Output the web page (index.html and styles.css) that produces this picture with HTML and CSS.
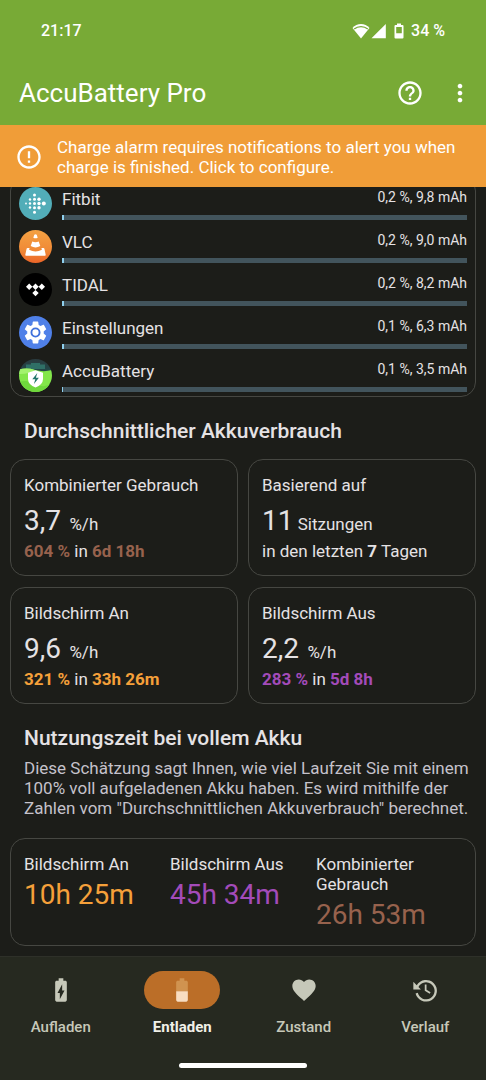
FILE: index.html
```html
<!DOCTYPE html>
<html lang="de">
<head>
<meta charset="utf-8">
<meta name="viewport" content="width=device-width, initial-scale=1">
<title>AccuBattery Pro</title>
<link rel="stylesheet" href="styles.css">
</head>
<body>
<header class="top">
  <div class="status">
    <span>21:17</span>
    <span class="status-icons">
      <svg class="wifi" viewBox="0 0 18 16"><path d="M9 15.500.5 5C2.700 2.400 5.800 1.100 9 1.100s6.300 1.300 8.500 3.900z" fill="#fff"/><path d="M2.200 6C6 2.800 12 2.800 15.800 6" fill="none" stroke="#78aa36" stroke-width="1.300"/></svg>
      <svg class="signal" viewBox="0 0 15 16"><path d="M.5 15.200H14.800V1z" fill="#fff"/></svg>
      <svg class="cell" viewBox="0 0 10 16"><path fill="#fff" fill-rule="evenodd" d="M3 .5h4V2h1.500Q9.500 2 9.500 3v11.500q0 1-1 1h-7q-1 0-1-1V3q0-1 1-1H3zM2.200 4v6.200h5.600V4z"/></svg>
      <span>34 %</span>
    </span>
  </div>
  <div class="appbar">
    <h1 class="title">AccuBattery Pro</h1>
    <button class="icon-btn" aria-label="Hilfe"><svg class="icon" viewBox="0 0 24 24"><path d="M11 18h2v-2h-2v2zm1-16C6.480 2 2 6.480 2 12s4.480 10 10 10 10-4.480 10-10S17.520 2 12 2zm0 18c-4.410 0-8-3.590-8-8s3.590-8 8-8 8 3.590 8 8-3.590 8-8 8zm0-14c-2.210 0-4 1.790-4 4h2c0-1.100.9-2 2-2s2 .9 2 2c0 2-3 1.750-3 5h2c0-2.250 3-2.500 3-5 0-2.210-1.790-4-4-4z"/></svg></button>
    <button class="icon-btn" aria-label="Menü"><svg class="icon" viewBox="0 0 24 24"><path d="M12 8c1.100 0 2-.9 2-2s-.9-2-2-2-2 .9-2 2 .9 2 2 2zm0 2c-1.100 0-2 .9-2 2s.9 2 2 2 2-.9 2-2-.9-2-2-2zm0 6c-1.100 0-2 .9-2 2s.9 2 2 2 2-.9 2-2-.9-2-2-2z"/></svg></button>
  </div>
</header>
<button class="banner">
  <svg class="icon" viewBox="0 0 24 24"><path d="M11 15h2v2h-2zm0-8h2v6h-2zm1-5C6.480 2 2 6.480 2 12s4.480 10 10 10 10-4.480 10-10S17.520 2 12 2zm0 18c-4.410 0-8-3.590-8-8s3.590-8 8-8 8 3.590 8 8-3.590 8-8 8z"/></svg>
  <span>Charge alarm requires notifications to alert you when charge is finished. Click to configure.</span>
</button>
<main class="content">
  <ul class="card apps">
    <li class="app">
      <svg class="app-icon" viewBox="0 0 33 33"><circle cx="16.500" cy="16.500" r="16.500" fill="#52adb8"/><g fill="#fff"><circle cx="7" cy="16.500" r=".9"/><circle cx="11" cy="12.500" r="1.200"/><circle cx="11" cy="16.500" r="1.200"/><circle cx="11" cy="20.500" r="1.200"/><circle cx="15.500" cy="8" r="1.500"/><circle cx="15.500" cy="12.300" r="1.500"/><circle cx="15.500" cy="16.500" r="1.500"/><circle cx="15.500" cy="20.800" r="1.500"/><circle cx="15.500" cy="25.200" r="1.500"/><circle cx="20" cy="12.300" r="1.700"/><circle cx="20" cy="16.500" r="1.700"/><circle cx="20" cy="20.800" r="1.700"/><circle cx="24.800" cy="16.500" r="2"/></g></svg>
      <div class="app-body"><span class="app-name">Fitbit</span><span class="app-use">0,2 %, 9,8 mAh</span><div class="bar"><div class="fill" style="width:0.6%"></div></div></div>
    </li>
    <li class="app">
      <svg class="app-icon" viewBox="0 0 33 33"><defs><linearGradient id="vlc" x2="0" y2="1"><stop stop-color="#f4a243"/><stop offset=".6" stop-color="#f08a36"/><stop offset="1" stop-color="#ec6528"/></linearGradient></defs><circle cx="16.500" cy="16.500" r="16.500" fill="url(#vlc)"/><g fill="#fff"><path d="M15.300 4.800q1.200-1 2.400 0l1 2.900q-2.200 1.200-4.400 0z"/><path d="M13.300 11.500q3.200 1.400 6.400 0l1.600 4.500q-4.800 2.800-9.600 0z"/><path d="M8.600 17.900h2l-.5 1.800q6.400 3.600 12.800 0l-.5-1.800h2q.8 0 1 .8l1.300 6q.2 1-.8 1H7.100q-1 0-.8-1l1.300-6q.2-.8 1-.8z"/></g></svg>
      <div class="app-body"><span class="app-name">VLC</span><span class="app-use">0,2 %, 9,0 mAh</span><div class="bar"><div class="fill" style="width:0.5%"></div></div></div>
    </li>
    <li class="app">
      <svg class="app-icon" viewBox="0 0 33 33"><circle cx="16.500" cy="16.500" r="16.500" fill="#000"/><path fill="#fff" d="M10.200 10.500l3.200 3.200-3.200 3.200L7 13.700zM16.500 10.500l3.200 3.200-3.200 3.200-3.200-3.200zM22.800 10.500l3.200 3.200-3.200 3.200-3.200-3.200zM16.500 16.900l3.200 3.200-3.200 3.200-3.200-3.200z"/></svg>
      <div class="app-body"><span class="app-name">TIDAL</span><span class="app-use">0,2 %, 8,2 mAh</span><div class="bar"><div class="fill" style="width:0.5%"></div></div></div>
    </li>
    <li class="app">
      <svg class="app-icon" viewBox="0 0 33 33"><circle cx="16.500" cy="16.500" r="16.500" fill="#4f80e8"/><g transform="translate(3.300 3.300) scale(1.100)"><path fill="#fff" d="M19.430 12.980c.04-.32.07-.64.07-.98s-.03-.66-.07-.98l2.110-1.650c.19-.15.24-.42.12-.64l-2-3.460c-.12-.22-.39-.3-.61-.22l-2.490 1c-.52-.4-1.080-.73-1.690-.98l-.38-2.650C14.460 2.180 14.250 2 14 2h-4c-.25 0-.46.180-.49.420l-.38 2.650c-.61.25-1.170.59-1.690.98l-2.490-1c-.23-.09-.49 0-.61.220l-2 3.460c-.13.220-.07.490.12.640l2.110 1.650c-.04.320-.07.650-.07.980s.03.660.07.980l-2.110 1.650c-.19.150-.24.420-.12.640l2 3.460c.12.220.39.300.61.220l2.490-1c.52.400 1.080.730 1.690.980l.38 2.650c.03.240.24.420.49.420h4c.25 0 .46-.180.490-.420l.38-2.650c.61-.25 1.170-.59 1.690-.98l2.490 1c.23.090.49 0 .61-.22l2-3.460c.12-.22.07-.49-.12-.64z"/><circle cx="12" cy="12" r="3.700" fill="none" stroke="#3f71dc" stroke-width="1.700"/></g></svg>
      <div class="app-body"><span class="app-name">Einstellungen</span><span class="app-use">0,1 %, 6,3 mAh</span><div class="bar"><div class="fill" style="width:0.4%"></div></div></div>
    </li>
    <li class="app">
      <svg class="app-icon" viewBox="0 0 33 33"><defs><clipPath id="disc"><circle cx="16.500" cy="16.500" r="16.500"/></clipPath><linearGradient id="night" x2="0" y2="1"><stop stop-color="#2a3a3e"/><stop offset="1" stop-color="#1f4c4c"/></linearGradient></defs><g clip-path="url(#disc)"><path fill="url(#night)" d="M0 0h33v16H0z"/><path fill="#2f6f66" d="M12 4h9v1.500h5V10h-19V5.500h5z"/><path fill="#83e64a" d="M0 10.500q8-2 16 .5 9 2.300 17 0V33H0z"/><path fill="#a2f26e" d="M0 10.500q8-2 16 .5-7 4.500-16 4z"/><path fill="#6fd83c" d="M0 23q9-3 17 2t16-1v9H0z"/><path fill="#fff" d="M16.500 11.200l7.500 2.500v6.200q0 5.500-7.500 8.600Q9 25.400 9 19.900v-6.200z"/><path fill="#22776a" d="M18.300 14l-5 6.200h3l-1.400 4.800 5-6.300h-3z"/></g></svg>
      <div class="app-body"><span class="app-name">AccuBattery</span><span class="app-use">0,1 %, 3,5 mAh</span><div class="bar"><div class="fill" style="width:0.2%"></div></div></div>
    </li>
  </ul>

  <h2 class="heading">Durchschnittlicher Akkuverbrauch</h2>
  <section class="grid">
    <article class="card stat">
      <h3 class="label">Kombinierter Gebrauch</h3>
      <p class="figure"><span class="big">3,7</span>&nbsp; %/h</p>
      <p class="detail"><b class="brown">604 %</b> in <b class="brown">6d 18h</b></p>
    </article>
    <article class="card stat">
      <h3 class="label">Basierend auf</h3>
      <p class="figure"><span class="big">11</span> Sitzungen</p>
      <p class="detail">in den letzten <b>7</b> Tagen</p>
    </article>
    <article class="card stat">
      <h3 class="label">Bildschirm An</h3>
      <p class="figure"><span class="big">9,6</span>&nbsp; %/h</p>
      <p class="detail"><b class="orange">321 %</b> in <b class="orange">33h 26m</b></p>
    </article>
    <article class="card stat">
      <h3 class="label">Bildschirm Aus</h3>
      <p class="figure"><span class="big">2,2</span>&nbsp; %/h</p>
      <p class="detail"><b class="purple">283 %</b> in <b class="purple">5d 8h</b></p>
    </article>
  </section>

  <h2 class="heading with-note">Nutzungszeit bei vollem Akku</h2>
  <p class="note">Diese Schätzung sagt Ihnen, wie viel Laufzeit Sie mit einem 100% voll aufgeladenen Akku haben. Es wird mithilfe der Zahlen vom "Durchschnittlichen Akkuverbrauch" berechnet.</p>
  <section class="card times">
    <div><h3 class="label">Bildschirm An</h3><p class="time orange">10h 25m</p></div>
    <div><h3 class="label">Bildschirm Aus</h3><p class="time purple">45h 34m</p></div>
    <div><h3 class="label">Kombinierter Gebrauch</h3><p class="time brown">26h 53m</p></div>
  </section>
</main>
<footer class="bottom">
  <nav class="tabs">
    <button class="tab"><span class="pill"><svg class="icon" viewBox="0 0 24 24"><path d="M15.670 4H14V2h-4v2H8.330C7.600 4 7 4.600 7 5.330v15.330C7 21.400 7.600 22 8.330 22h7.330c.74 0 1.340-.6 1.340-1.330V5.330C17 4.600 16.400 4 15.670 4zM11 20v-5.500H9L13 7v5.500h2L11 20z"/></svg></span>Aufladen</button>
    <button class="tab active" aria-current="page"><span class="pill"><svg class="icon" viewBox="0 0 24 24"><path fill="#d09350" d="M17 5.330C17 4.600 16.400 4 15.670 4H14V2h-4v2H8.330C7.600 4 7 4.600 7 5.330V13h10z"/><path fill="#f8ddc1" d="M7 13v7.670C7 21.400 7.600 22 8.330 22h7.330c.74 0 1.340-.6 1.340-1.330V13z"/></svg></span>Entladen</button>
    <button class="tab"><span class="pill"><svg class="icon" viewBox="0 0 24 24"><path d="M12 21.350l-1.450-1.320C5.400 15.360 2 12.280 2 8.500 2 5.420 4.420 3 7.500 3c1.740 0 3.410.81 4.500 2.090C13.090 3.810 14.760 3 16.500 3 19.580 3 22 5.420 22 8.500c0 3.780-3.400 6.860-8.550 11.540z"/></svg></span>Zustand</button>
    <button class="tab"><span class="pill"><svg class="icon" viewBox="0 0 24 24"><path d="M11.800 7.200h1.500v4.600l3.500 2.100-.8 1.300-4.200-2.600z"/><path d="M2 5v6.500h6.500L6.400 9.400a7.300 7.300 0 1 1-.6 5l-1.900.6A9.300 9.300 0 1 0 4.900 7.900z"/></svg></span>Verlauf</button>
  </nav>
  <div class="home"></div>
</footer>
</body>
</html>
```
FILE: styles.css
```css
* { box-sizing: border-box; }

body {
  margin: 0;
  height: 100vh;
  display: flex;
  flex-direction: column;
  background: #1c1d19;
  color: #e5e2e4;
  font: 400 17px/20px Roboto, sans-serif;
}

h1, h2, h3, p, ul { margin: 0; padding: 0; font-weight: 400; }
b { font-weight: 700; }
button { border: 0; margin: 0; padding: 0; background: none; color: inherit; font: inherit; cursor: pointer; }
.icon { display: block; flex: none; width: 28px; height: 28px; fill: currentColor; }

.orange { color: #f5a03a; }
.purple { color: #a34bb9; }
.brown { color: #97624d; }

.top { background: #78aa36; color: #fff; }
.status {
  display: flex;
  justify-content: space-between;
  padding: 21px 41px 19px;
  font-size: 16px;
  font-weight: 500;
}
.status-icons { display: flex; align-items: center; gap: 1px; }
.wifi { width: 18px; height: 16px; }
.signal { width: 15px; height: 16px; }
.cell { width: 10px; height: 16px; margin: 0 6px 0 7px; }
.appbar { display: flex; align-items: center; gap: 22px; height: 65px; padding: 0 12px 0 19px; }
.title { flex: 1; font-size: 26px; line-height: 32px; }

.banner {
  display: flex;
  align-items: center;
  gap: 14px;
  padding: 12px 24px 10px 15px;
  background: #f09d38;
  color: #fff;
  text-align: left;
}

.content {
  flex: 1;
  min-height: 0;
  overflow: hidden;
  display: flex;
  flex-direction: column;
  justify-content: flex-end;
  padding: 0 10px 10px;
}
.content > * { flex: none; }
.card { border: 1px solid #464742; border-radius: 15px; }

.apps { list-style: none; padding: 0 8px 4px; }
.app { display: flex; gap: 10px; height: 43px; padding-top: 10px; }
.app-icon { flex: none; width: 33px; height: 33px; }
.app-body { flex: 1; display: grid; grid-template-columns: 1fr auto; grid-template-rows: 28px 5px; }
.app-name { line-height: 24px; }
.app-use { font-size: 14px; }
.bar { grid-column: 1 / -1; background: #42545c; }
.fill { height: 100%; background: #8fd0ee; }

.heading { padding: 19px 14px 13px; font-size: 21px; line-height: 30px; font-weight: 500; }
.heading.with-note { padding-bottom: 5px; }
.grid { display: grid; grid-template-columns: 1fr 1fr; gap: 11px 10px; }
.stat { padding: 15px 13px 14px; }
.label { font-size: 17px; }
.figure { margin-top: 9px; line-height: 34px; }
.big { font-size: 28px; }

.note { padding: 0 4px 0 14px; color: #c5c2cb; }
.times { display: grid; grid-template-columns: repeat(3, 1fr); margin-top: 20px; padding: 15px 13px 9px; }
.time { font-size: 28px; line-height: 42px; }

.bottom { background: #262920; border-top: 1px solid #2e3029; }
.tabs { display: grid; grid-template-columns: repeat(4, 1fr); padding-top: 14px; }
.tab {
  display: flex;
  flex-direction: column;
  align-items: center;
  gap: 8px;
  color: #c6c8b9;
  font-size: 15px;
  font-weight: 500;
}
.pill { display: grid; place-items: center; width: 76px; height: 38px; border-radius: 19px; }
.active { color: #f1f0e8; font-weight: 700; }
.active .pill { background: #bb6e28; }
.home { width: 128px; height: 5px; margin: 26px auto 12px; border-radius: 3px; background: #fff; }
```
